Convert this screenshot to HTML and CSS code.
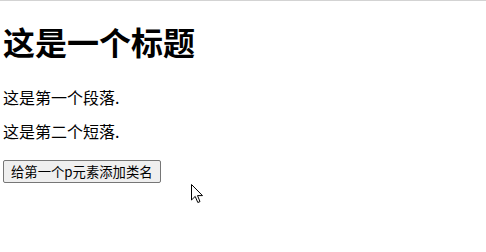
FILE: index.html
```html
<!DOCTYPE html>
<html lang="zh-CN">
<head>
<meta charset="utf-8">
<title>标题</title>
<link rel="stylesheet" href="styles.css">
</head>
<body>
<h1 class="title">这是一个标题</h1>
<p class="para">这是第一个段落.</p>
<p class="para">这是第二个短落.</p>
<div class="actions">
  <button class="btn" type="button">给第一个p元素添加类名</button>
</div>
<svg class="cursor" width="13" height="20" viewBox="0 0 13 20" aria-hidden="true">
  <path d="M0.5 0.5 L0.5 16 L4.2 12.4 L6.8 18.5 L9 17.6 L6.5 11.6 L11.5 11.6 Z" fill="#fff" stroke="#000" stroke-width="1" stroke-linejoin="miter"/>
</svg>
</body>
</html>
```
FILE: styles.css
```css
html, body {
  background: #ffffff;
}
body {
  margin: 0;
  padding: 0 3px;
  border-top: 1px solid #d3d3d3;
  font-family: "Noto Sans CJK SC", "Noto Sans", sans-serif;
  color: #000;
  min-height: 251px;
  position: relative;
}
.title {
  font-size: 32px;
  font-weight: 700;
  line-height: 38px;
  margin: 21px 0 28px;
}
.para {
  font-size: 16px;
  line-height: 18px;
  margin: 0;
}
.para + .para {
  margin-top: 16px;
}
.actions {
  margin-top: 18px;
}
.btn {
  font-family: "Noto Sans CJK SC", "Noto Sans", sans-serif;
  font-size: 13.33px;
  line-height: 17px;
  color: #000;
  background: #efefef;
  border: 1px solid #767676;
  border-radius: 2px;
  padding: 2px 7px;
  margin: 0;
}
.cursor {
  position: absolute;
  left: 191px;
  top: 183px;
}
```
